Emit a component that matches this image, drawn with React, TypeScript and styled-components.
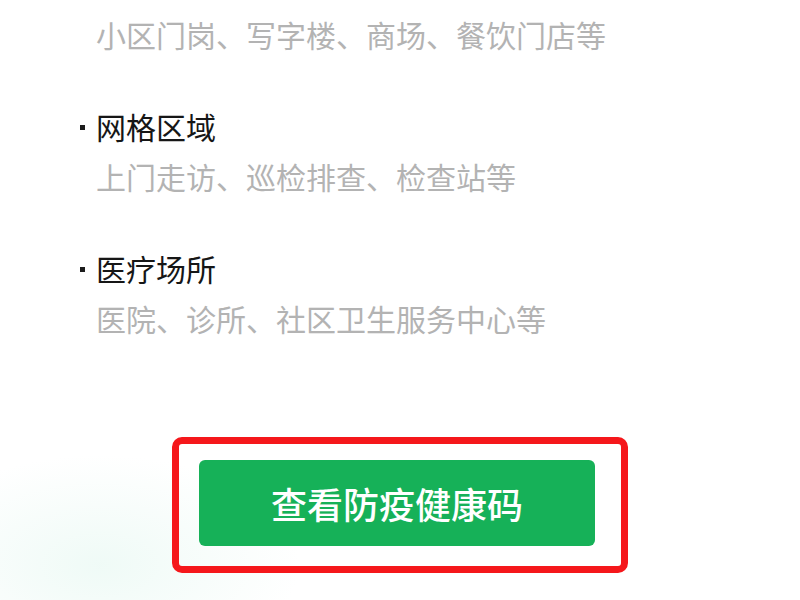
import React from 'react';
import styled, { createGlobalStyle } from 'styled-components';

const GlobalStyle = createGlobalStyle`
  html, body {
    margin: 0;
    padding: 0;
    background: #ffffff;
  }
  body {
    font-family: "Noto Sans CJK SC", "Noto Sans", sans-serif;
  }
`;

const Page = styled.div`
  width: 800px;
  height: 600px;
  overflow: hidden;
  box-sizing: border-box;
  padding-top: 14px;
  background:
    radial-gradient(ellipse 200px 110px at 100px 565px, rgba(220, 245, 236, 0.45), rgba(255, 255, 255, 0) 100%),
    #ffffff;
  display: flex;
  flex-direction: column;
`;

const List = styled.div`
  display: flex;
  flex-direction: column;
  gap: 52px;
  padding-left: 79px;
`;

const Item = styled.div`
  display: flex;
  flex-direction: column;
  gap: 10px;
`;

const TitleRow = styled.div`
  display: flex;
  align-items: center;
  height: 40px;
`;

const Bullet = styled.span`
  width: 17px;
  display: flex;
  align-items: center;

  &::before {
    content: '';
    width: 5px;
    height: 5px;
    margin-left: 1px;
    margin-top: 2px;
    background: #1c1c1c;
  }
`;

const Title = styled.span`
  font-size: 30px;
  line-height: 40px;
  color: #161616;
`;

const Desc = styled.div`
  font-size: 30px;
  line-height: 40px;
  color: #b3b3b3;
  padding-left: 17px;
`;

const Footer = styled.div`
  display: flex;
  justify-content: center;
  margin-top: 99px;
`;

const Highlight = styled.div`
  width: 456px;
  box-sizing: border-box;
  border: 7px solid #f5171b;
  border-radius: 10px;
  padding: 16px 26px 20px 20px;
`;

const Button = styled.button`
  width: 100%;
  height: 86px;
  border: none;
  border-radius: 6px;
  background: #16b158;
  color: #ffffff;
  font-family: "Noto Sans CJK SC", "Noto Sans", sans-serif;
  font-size: 36px;
  font-weight: 500;
  cursor: pointer;
`;

const items = [
  { title: '网格区域', desc: '上门走访、巡检排查、检查站等' },
  { title: '医疗场所', desc: '医院、诊所、社区卫生服务中心等' },
];

const App = () => {
  return (
    <>
      <GlobalStyle />
      <Page>
        <List>
          <Desc>小区门岗、写字楼、商场、餐饮门店等</Desc>
          {items.map((item) => (
            <Item key={item.title}>
              <TitleRow>
                <Bullet />
                <Title>{item.title}</Title>
              </TitleRow>
              <Desc>{item.desc}</Desc>
            </Item>
          ))}
        </List>

        <Footer>
          <Highlight>
            <Button>查看防疫健康码</Button>
          </Highlight>
        </Footer>
      </Page>
    </>
  );
};

export default App;
